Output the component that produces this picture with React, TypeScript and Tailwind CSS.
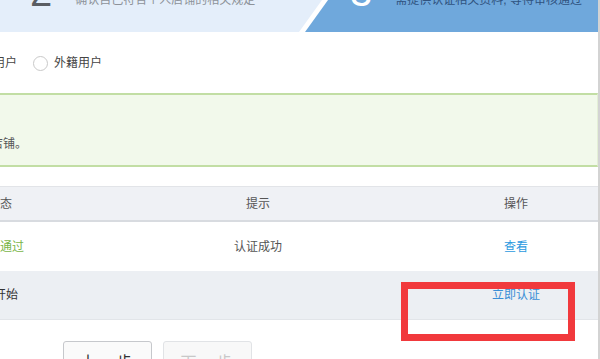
import React from 'react';

const FONT = "font-['Liberation_Sans','Noto_Sans_CJK_SC',sans-serif]";

const StepBanner: React.FC = () => (
  <div className="flex h-8 overflow-hidden bg-white">
    <div className="w-[322px] shrink-0 bg-[#e4eefa] [clip-path:polygon(0_0,100%_0,calc(100%-23px)_100%,0_100%)] flex items-start pl-[30px]">
      <span className="-mt-[28px] text-[40px] leading-[40px] text-[#5a5d62]">2</span>
      <span className="ml-[23px] -mt-[6px] text-[12px] leading-[12px] text-[#8d9299] whitespace-nowrap">
        确认自己符合个人店铺的相关规定
      </span>
    </div>
    <div className="flex-1 -ml-[17px] bg-[#6fa8dc] [clip-path:polygon(23px_0,100%_0,100%_100%,0_100%)] flex items-start pl-[45px]">
      <span className="-mt-[28px] text-[40px] leading-[40px] text-white">3</span>
      <span className="ml-[23px] -mt-[6px] text-[12px] leading-[12px] text-[#2f5380] whitespace-nowrap">
        需提供认证相关资料, 等待审核通过
      </span>
    </div>
  </div>
);

const Radio: React.FC<{ label: string }> = ({ label }) => (
  <label className="flex items-center gap-[6px]">
    <span className="w-[15px] h-[15px] rounded-full border border-[#c9c9c9] bg-white" />
    <span className="text-[12px] leading-[15px] text-[#444]">{label}</span>
  </label>
);

const rows = [
  { status: '审核通过', statusCls: 'text-[#79b548]', hint: '认证成功', action: '查看', bg: 'bg-white', actionCls: 'text-[#2b9ae0]' },
  { status: '未开始', statusCls: 'text-[#333]', hint: '', action: '立即认证', bg: 'bg-[#eceff3]', actionCls: 'text-[#3a8ed6]' },
];

export default function App() {
  return (
    <div className={`relative w-[600px] h-[359px] overflow-hidden bg-white border-r-2 border-[#d3d3d3] ${FONT}`}>
      <StepBanner />

      <div className="mt-[24px] -ml-[52px] flex items-center gap-4">
        <Radio label="个人用户" />
        <Radio label="外籍用户" />
      </div>

      <div className="mt-[22px] h-[74px] border-y-2 border-r border-[#c2dea4] border-r-[#e3efd6] bg-[#f2f9eb] pt-[39px] -ml-[9px]">
        <p className="text-[12px] leading-[20px] text-[#555]">店铺。</p>
      </div>

      <div className="mt-[19px] -ml-[120px] text-[12px] text-center">
        <div className="grid grid-cols-[240px_276px_1fr_164px] h-[36px] items-center bg-[#eff1f5] border-t border-[#e2e4e8] border-b-2 border-b-[#d8dbe0] text-[#555]">
          <span>状态</span>
          <span>提示</span>
          <span />
          <span>操作</span>
        </div>
        {rows.map((r, i) => (
          <div
            key={i}
            className={`grid grid-cols-[240px_276px_1fr_164px] h-[49px] items-center ${r.bg} ${i === rows.length - 1 ? 'border-b border-[#e2e5e9]' : ''}`}
          >
            <span className={r.statusCls}>{r.status}</span>
            <span className="text-[#555]">{r.hint}</span>
            <span />
            <span className={`${r.actionCls} cursor-pointer`}>{r.action}</span>
          </div>
        ))}
      </div>

      <div className="mt-[21px] ml-[63px] flex gap-[11px]">
        <button className="w-[89px] h-[38px] rounded-[3px] border border-[#c6c8cc] bg-[#fafafa] pt-[5px] text-[16px] leading-[24px] tracking-[2px] text-[#333] self-start">
          上一步
        </button>
        <button className="w-[89px] h-[38px] rounded-[3px] border border-[#e1e3e6] bg-[#f8f8f8] pt-[5px] text-[16px] leading-[24px] tracking-[2px] text-[#c8c8c8] self-start">
          下一步
        </button>
      </div>

      <div className="absolute left-[401px] top-[282px] w-[174px] h-[59px] border-[7px] border-[#f1393c]" />
    </div>
  );
}
